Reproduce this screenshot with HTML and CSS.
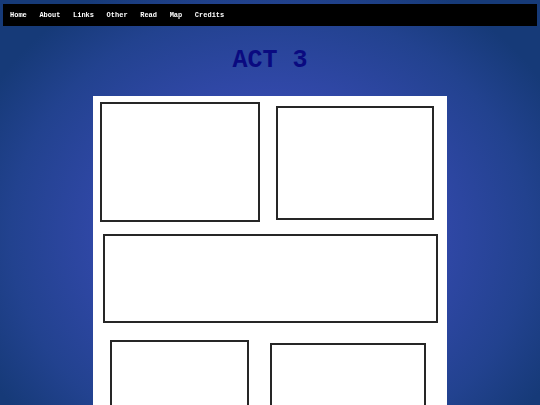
FILE: index.html
```html
<!DOCTYPE html>
<html>
<head>
<meta charset="utf-8">
<link rel="stylesheet" href="styles.css">
</head>
<body>
<nav class="nav">
  <span class="nav-item">Home</span>
  <span class="nav-item">About</span>
  <span class="nav-item">Links</span>
  <span class="nav-item">Other</span>
  <span class="nav-item">Read</span>
  <span class="nav-item">Map</span>
  <span class="nav-item">Credits</span>
</nav>
<h1 class="title">ACT 3</h1>
<main class="page">
  <div class="row row-1">
    <div class="panel p1"></div>
    <div class="panel p2"></div>
  </div>
  <div class="row row-2">
    <div class="panel p3"></div>
  </div>
  <div class="row row-3">
    <div class="panel p4"></div>
    <div class="panel p5"></div>
  </div>
</main>
</body>
</html>
```
FILE: styles.css
```css
html, body {
  margin: 0;
  padding: 0;
  height: 100%;
  overflow: hidden;
}
body {
  background: radial-gradient(ellipse 60% 70% at 50% 58%, #3d50ba 0%, #3449ad 45%, #22428f 80%, #163a78 100%);
  font-family: "Liberation Mono", "Courier New", monospace;
}
.nav {
  margin: 4px 3px 0;
  height: 22px;
  background: #000;
  display: flex;
  align-items: center;
  padding-left: 0.7px;
  will-change: transform;
}
.nav-item {
  color: #fff;
  font-weight: bold;
  font-size: 7px;
  padding: 0 6.3px;
  line-height: 22px;
  -webkit-font-smoothing: antialiased;
}
.title {
  margin: 20px 0 0;
  height: 50px;
  line-height: 30px;
  text-align: center;
  font-size: 25px;
  font-weight: bold;
  color: #0a0a80;
}
.page {
  width: 354px;
  margin: 0 auto;
  background: #fff;
  height: 320px;
  padding-top: 6px;
  box-sizing: border-box;
}
.row {
  display: flex;
  align-items: flex-start;
}
.panel {
  border: 2px solid #262626;
  box-sizing: border-box;
  background: #fff;
}
.p1 { margin-left: 7px; width: 160px; height: 120px; }
.p2 { margin-left: 16px; margin-top: 4px; width: 158px; height: 114px; }
.row-2 { margin-top: 12px; }
.p3 { margin-left: 10px; width: 335px; height: 89px; }
.row-3 { margin-top: 17px; }
.p4 { margin-left: 17px; width: 139px; height: 80px; }
.p5 { margin-left: 21px; margin-top: 3px; width: 156px; height: 80px; }
```
